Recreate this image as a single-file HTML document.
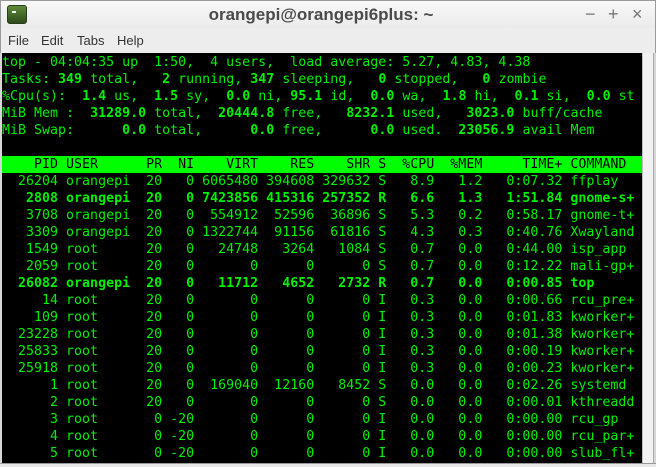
<!DOCTYPE html>
<html><head><style>
*{margin:0;padding:0;box-sizing:border-box}
body{width:656px;height:467px;overflow:hidden;background:#d6d6d6;font-family:"Liberation Sans",sans-serif;position:relative}
#title{position:absolute;left:0;top:0;width:656px;height:28px;background:linear-gradient(#f8f8f8,#ebebeb);border:1px solid #9a9a9a;border-bottom:none}
#title .t{position:absolute;left:0;right:14px;top:4px;text-align:center;font-weight:bold;font-size:17px;color:#4a4a4a}
#icon{position:absolute;left:6px;top:4px;width:20px;height:19px;border-radius:3px;background:linear-gradient(#5f8a3a,#2e4a1a);border:1px solid #2a3a1a}
#icon:after{content:"";position:absolute;left:4px;top:5px;width:4px;height:2px;background:#dfe}
.wb{position:absolute;top:3px;font-size:18px;color:#777}
#menu{position:absolute;left:0;top:28px;width:656px;height:25px;background:#ededed;border-left:1px solid #9a9a9a;border-right:1px solid #9a9a9a;font-size:13px;color:#333}
#menu span{position:absolute;top:5px}
#term{position:absolute;left:2px;top:53px;width:640px;height:410px;background:#000;overflow:hidden;font-family:"DejaVu Sans Mono","Liberation Mono",monospace;font-size:13.3px;line-height:17px;color:#00f000;white-space:pre;padding-top:1px}
#term b{font-weight:bold}
.hd{background:#00ff00;color:#000;display:block}
#sb{position:absolute;left:642px;top:53px;width:12px;height:410px;background:#f2f2f2;border-left:1px solid #bbb;border-right:1px solid #aaa}
#bot{position:absolute;left:0;top:463px;width:656px;height:4px;background:#e8e8e8;border-top:1px solid #999}
</style></head><body>
<div id="title"><div id="icon"></div><div class="t">orangepi@orangepi6plus: ~</div>
<span class="wb" style="left:584px">−</span><span class="wb" style="left:607px">+</span><span class="wb" style="left:631px">×</span></div>
<div id="menu"><span style="left:7px">File</span><span style="left:40px">Edit</span><span style="left:76px">Tabs</span><span style="left:116px">Help</span></div>
<div id="term">top - 04:04:35 up  1:50,  4 users,  load average: 5.27, 4.83, 4.38
Tasks: <b>349</b> total,   <b>2</b> running, <b>347</b> sleeping,   <b>0</b> stopped,   <b>0</b> zombie
%Cpu(s):  <b>1.4</b> us,  <b>1.5</b> sy,  <b>0.0</b> ni, <b>95.1</b> id,  <b>0.0</b> wa,  <b>1.8</b> hi,  <b>0.1</b> si,  <b>0.0</b> st
MiB Mem :  <b>31289.0</b> total,  <b>20444.8</b> free,   <b>8232.1</b> used,   <b>3023.0</b> buff/cache
MiB Swap:      <b>0.0</b> total,      <b>0.0</b> free,      <b>0.0</b> used.  <b>23056.9</b> avail Mem

<span class="hd">    PID USER      PR  NI    VIRT    RES    SHR S  %CPU  %MEM     TIME+ COMMAND    </span>  26204 orangepi  20   0 6065480 394608 329632 S   8.9   1.2   0:07.32 ffplay
<b>   2808 orangepi  20   0 7423856 415316 257352 R   6.6   1.3   1:51.84 gnome-s+</b>
   3708 orangepi  20   0  554912  52596  36896 S   5.3   0.2   0:58.17 gnome-t+
   3309 orangepi  20   0 1322744  91156  61816 S   4.3   0.3   0:40.76 Xwayland
   1549 root      20   0   24748   3264   1084 S   0.7   0.0   0:44.00 isp_app
   2059 root      20   0       0      0      0 S   0.7   0.0   0:12.22 mali-gp+
<b>  26082 orangepi  20   0   11712   4652   2732 R   0.7   0.0   0:00.85 top</b>
     14 root      20   0       0      0      0 I   0.3   0.0   0:00.66 rcu_pre+
    109 root      20   0       0      0      0 I   0.3   0.0   0:01.83 kworker+
  23228 root      20   0       0      0      0 I   0.3   0.0   0:01.38 kworker+
  25833 root      20   0       0      0      0 I   0.3   0.0   0:00.19 kworker+
  25918 root      20   0       0      0      0 I   0.3   0.0   0:00.23 kworker+
      1 root      20   0  169040  12160   8452 S   0.0   0.0   0:02.26 systemd
      2 root      20   0       0      0      0 S   0.0   0.0   0:00.01 kthreadd
      3 root       0 -20       0      0      0 I   0.0   0.0   0:00.00 rcu_gp
      4 root       0 -20       0      0      0 I   0.0   0.0   0:00.00 rcu_par+
      5 root       0 -20       0      0      0 I   0.0   0.0   0:00.00 slub_fl+</div>
<div id="sb"></div>
<div id="bot"></div>
</body></html>
